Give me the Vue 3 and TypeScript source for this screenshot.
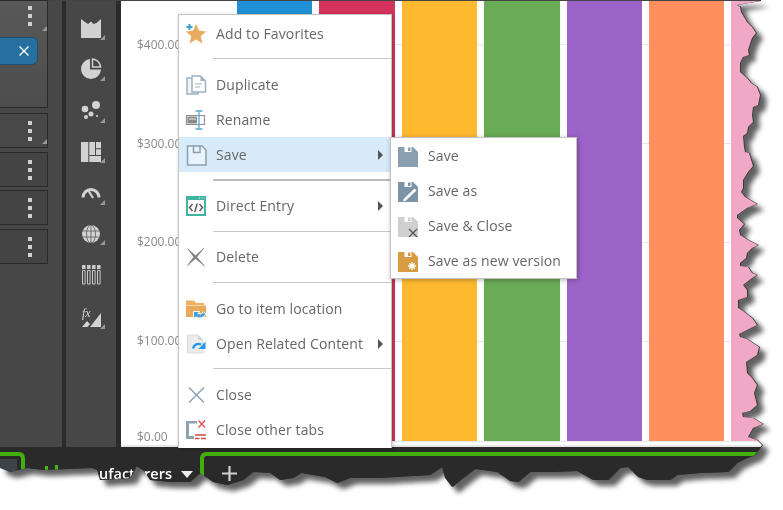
<script setup lang="ts">
const axis: string[] = ['$400.00', '$300.00', '$200.00', '$100.00', '$0.00']
const bars: string[] = ['#2090d6', '#d4335e', '#ffb92f', '#6aab55', '#9c63c9', '#ff8f5e', '#f0a8c6']
const rows: number[] = [1, 2, 3, 4]
const dots: number[] = [1, 2, 3]
</script>

<template>
  <div class="page">
    <div class="torn">
      <div class="sheet">
        <div class="main">
          <aside class="fields">
            <div class="field first">
              <div class="dots"><i v-for="d in dots" :key="d"></i></div>
              <span class="corner"></span>
              <div class="tag">
                <svg width="12" height="12" viewBox="0 0 12 12"><path d="M1.5 1.5 10.5 10.5M10.5 1.5 1.5 10.5" stroke="#fff" stroke-width="1.4" /></svg>
              </div>
            </div>
            <div v-for="r in rows" :key="r" class="field">
              <div class="dots"><i v-for="d in dots" :key="d"></i></div>
              <span v-if="r === 1" class="corner"></span>
            </div>
          </aside>

          <nav class="rail">
            <svg class="ri" viewBox="0 0 30 41"><path d="M5 6 9 9 12 11 15 8.500 17.500 11 20.500 10 25 6V25H5Z" fill="#d2d2d2" /><path d="M29 22V27H24Z" fill="#999" /></svg>
            <svg class="ri" viewBox="0 0 30 41"><path d="M14 5A10 10 0 1 0 25 15.500H14Z" fill="#d2d2d2" /><path d="M16.500 5V13H24.500A8.500 8.500 0 0 0 16.500 5Z" fill="none" stroke="#d2d2d2" stroke-width="1.500" /><path d="M29 22V27H24Z" fill="#999" /></svg>
            <svg class="ri" viewBox="0 0 30 41"><circle cx="20" cy="10" r="4" fill="#d2d2d2" /><circle cx="9" cy="14" r="3.300" fill="#d2d2d2" /><circle cx="15" cy="19" r="2.500" fill="#d2d2d2" /><circle cx="10" cy="22" r="2" fill="#d2d2d2" /><circle cx="21" cy="21" r="1" fill="#d2d2d2" /><path d="M29 23V28H24Z" fill="#999" /></svg>
            <svg class="ri" viewBox="0 0 30 41"><path d="M5 6H12.300V26H5ZM13.300 6H19V19H13.300ZM20 6H25V12.300H20ZM20 13.300H25V19H20ZM13.300 20H25V26H13.300Z" fill="#d2d2d2" /><path d="M29 22V27H24Z" fill="#999" /></svg>
            <svg class="ri" viewBox="0 0 30 41"><path d="M7 20.500A8 8 0 0 1 23 20.500" fill="none" stroke="#d2d2d2" stroke-width="3" /><path d="M12 13 17 21" stroke="#d2d2d2" stroke-width="2.200" /><path d="M29 23V28H24Z" fill="#999" /></svg>
            <svg class="ri" viewBox="0 0 30 41"><circle cx="15" cy="16" r="9" fill="#d2d2d2" /><path d="M6 13H24M6 19H24M15 7V25" stroke="#5a5a5a" stroke-width=".8" /><ellipse cx="15" cy="16" rx="4.500" ry="9" fill="none" stroke="#5a5a5a" stroke-width=".8" /><path d="M29 22V27H24Z" fill="#999" /></svg>
            <svg class="ri" viewBox="0 0 30 41"><path d="M6 6H9.600V10H6ZM11 6H14.600V10H11ZM16 6H19.600V10H16ZM21 6H24.600V10H21Z" fill="#c8c8c8" /><path d="M6.500 11.500H9.100V25H6.500ZM11.500 11.500H14.100V25H11.500ZM16.500 11.500H19.100V25H16.500ZM21.500 11.500H24.100V25H21.500Z" fill="none" stroke="#c8c8c8" stroke-width="1" /></svg>
            <svg class="ri" viewBox="0 0 30 41"><text x="6" y="17" class="fx">fx</text><path d="M25 13V27H14ZM6 27 11 21 14 24 11.500 27Z" fill="#d2d2d2" /><path d="M29 24V29H24Z" fill="#999" /></svg>
          </nav>

          <section class="chart">
            <div class="axis">
              <span v-for="a in axis" :key="a">{{ a }}</span>
            </div>
            <div class="plot">
              <div v-for="b in bars" :key="b" class="bar" :style="{ background: b }"></div>
            </div>
          </section>
        </div>

        <footer class="tabs">
          <div class="tab-left"><span class="tab-fill"></span></div>
          <div class="tab-mid">
            <span class="green-bit"></span>
            <span class="green-bit two"></span>
            <span class="tab-name">Manufacturers</span>
            <span class="tab-caret"></span>
          </div>
          <div class="tab-right">
            <svg width="15" height="15" viewBox="0 0 15 15"><path d="M7.500 0V15M0 7.500H15" stroke="#d0d0d0" stroke-width="2.200" /></svg>
          </div>
        </footer>

        <div class="menu">
          <div class="item">
            <svg class="mi" viewBox="0 0 24 24"><path d="M12 2 15 8.800 22.200 9.400 16.700 14.200 18.400 21.400 12 17.600 5.600 21.400 7.300 14.200 1.800 9.400 9 8.800Z" fill="#e9ab60" /><path d="M5.500 1.500V8.500M2 5H9" stroke="#fff" stroke-width="3.500" /><path d="M5.500 2V8M2.500 5H8.500" stroke="#3f9ecb" stroke-width="2" /></svg>
            <span>Add to Favorites</span>
          </div>
          <div class="sep"></div>
          <div class="item">
            <svg class="mi" viewBox="0 0 24 24"><path d="M8 5H3V21H14V18" fill="#f2f5f7" stroke="#9db1be" stroke-width="1.500" /><path d="M8 3H16.500L21.500 8V19H8Z" fill="#fff" stroke="#9db1be" stroke-width="1.500" /><path d="M16.500 3V8H21.500Z" fill="#9db1be" /><path d="M11 11H18M11 14H16" stroke="#9db1be" stroke-width="1.200" /></svg>
            <span>Duplicate</span>
          </div>
          <div class="item">
            <svg class="mi" viewBox="0 0 24 24"><path d="M2.500 7.500H20.500V16.500H2.500Z" fill="#fff" stroke="#8e8e8e" stroke-width="1.200" /><path d="M3.500 8.500H13V15.500H3.500Z" fill="#8a8a8a" /><path d="M5 11H12" stroke="#c8c8c8" stroke-width="1.500" /><path d="M15 3.500V20.500M11.500 3H18.500M11.500 21H18.500" stroke="#5aa8d4" stroke-width="1.300" fill="none" /></svg>
            <span>Rename</span>
          </div>
          <div class="item on">
            <svg class="mi" viewBox="0 0 24 24"><path d="M3.500 3H18L22 7V22H3.500Z" fill="#e9f3fb" stroke="#8aa0af" stroke-width="1.500" /><path d="M9.500 3V9.500H16V3" fill="none" stroke="#8aa0af" stroke-width="1.500" /></svg>
            <span>Save</span>
            <i class="arrow"></i>
          </div>
          <div class="sep thick"></div>
          <div class="item">
            <svg class="mi" viewBox="0 0 24 24"><path d="M3 3H21V21H3Z" fill="#fff" stroke="#40b5a4" stroke-width="2" /><path d="M2 2H22V6H2Z" fill="#40b5a4" /><path d="M15 4H16M17.500 4H18.500M20 4H20.500" stroke="#fff" stroke-width="1.200" /><path d="M8.500 10 5.500 13.500 8.500 17M15.500 10 18.500 13.500 15.500 17M13.300 9.500 10.700 18" fill="none" stroke="#555" stroke-width="1.400" /></svg>
            <span>Direct Entry</span>
            <i class="arrow"></i>
          </div>
          <div class="sep wide-top tight-bottom"></div>
          <div class="item">
            <svg class="mi" viewBox="0 0 24 24"><path d="M3.500 3.500 11.500 10.800 20 3 12.800 12 20.500 21 11.500 13.600 3.500 20.500 9.800 12Z" fill="#7f7f7f" stroke="#7f7f7f" stroke-width=".6" /></svg>
            <span>Delete</span>
          </div>
          <div class="sep wide-top"></div>
          <div class="item">
            <svg class="mi" viewBox="0 0 24 24"><path d="M2 3.500H10L12 6H20V8H2Z" fill="#f0b060" /><path d="M2 8.500H22V20H2Z" fill="#e9a95b" /><path d="M22 17A7 7 0 0 1 12 20L9.500 21.500V14.500H16L13.800 16.500A4.500 4.500 0 0 0 19.500 15Z" fill="#4a9fd4" stroke="#fff" stroke-width="1" /></svg>
            <span>Go to item location</span>
          </div>
          <div class="item">
            <svg class="mi" viewBox="0 0 24 24"><path d="M3.500 3H14L19 8V21H3.500Z" fill="#ececec" stroke="#dcdcdc" stroke-width="1" /><path d="M14 3V8H19Z" fill="#d4d4d4" /><path d="M9 16.500C10 12.500 14 11 17 12.500" fill="none" stroke="#2299ee" stroke-width="2.400" /><path d="M21.500 9.500V17H14.500Z" fill="#2299ee" /></svg>
            <span>Open Related Content</span>
            <i class="arrow"></i>
          </div>
          <div class="sep"></div>
          <div class="item">
            <svg class="mi" viewBox="0 0 24 24"><path d="M5 4.500 20 19.500M20 4.500 5 19.500" stroke="#8ba3b3" stroke-width="1.500" /></svg>
            <span>Close</span>
          </div>
          <div class="item">
            <svg class="mi" viewBox="0 0 24 24"><path d="M2 3H13V5.500H5V18H10V21H2Z" fill="#8ba3b3" /><path d="M14.500 2.500 21 9.500M21 2.500 14.500 9.500" stroke="#d9534f" stroke-width="1.300" /><path d="M11 17H22M11 20.500H15.500M17 20.500H22" stroke="#d04a4a" stroke-width="1.600" /></svg>
            <span>Close other tabs</span>
          </div>
        </div>

        <div class="menu sub">
          <div class="subitem">
            <svg class="si" viewBox="0 0 20 20"><path d="M0 0H15L20 5V20H0Z" fill="#8a9fb0" /><path d="M6.500 0H13.500V5H6.500Z" fill="#fff" /><path d="M10 .5H12.500V4H10Z" fill="#8a9fb0" /></svg>
            <span>Save</span>
          </div>
          <div class="subitem">
            <svg class="si" viewBox="0 0 20 20"><path d="M0 0H15L20 5V20H0Z" fill="#7c94a8" /><path d="M6.500 0H13.500V5H6.500Z" fill="#fff" /><path d="M10 .5H12.500V4H10Z" fill="#7c94a8" /><path d="M6.500 18 17.500 7.500" stroke="#fff" stroke-width="2.600" /><path d="M5 19.500 6 16.500 8 18.500Z" fill="#fff" /></svg>
            <span>Save as</span>
          </div>
          <div class="subitem">
            <svg class="si" viewBox="0 0 20 20"><path d="M0 0H15L20 5V20H0Z" fill="#cfcfcf" /><path d="M6.500 0H13.500V5H6.500Z" fill="#fff" /><path d="M10 .5H12.500V4H10Z" fill="#cfcfcf" /><path d="M10 10H20V20H10Z" fill="#cfcfcf" /><path d="M11 12 19 20M19 12 11 20" stroke="#555" stroke-width="1.300" /></svg>
            <span>Save &amp; Close</span>
          </div>
          <div class="subitem">
            <svg class="si" viewBox="0 0 20 20"><path d="M0 0H15L20 5V20H0Z" fill="#d89a45" /><path d="M6.500 0H13.500V5H6.500Z" fill="#fff" /><path d="M10 .5H12.500V4H10Z" fill="#d89a45" /><path d="M14 10V18M10 14H18M11.200 11.200 16.800 16.800M16.800 11.200 11.200 16.800" stroke="#fff" stroke-width="1.300" /></svg>
            <span>Save as new version</span>
          </div>
        </div>
      </div>
    </div>
  </div>
</template>

<style scoped>
.page {
  width: 783px;
  height: 510px;
  background: #fff;
  overflow: hidden;
  font-family: "Open Sans", "Noto Sans", sans-serif;
}
.torn {
  width: 783px;
  height: 510px;
  filter: drop-shadow(1px 0.5px 0 #3a3a3a) drop-shadow(6px 6px 2.500px rgba(0, 0, 0, 0.62));
}
.sheet {
  position: relative;
  width: 783px;
  height: 510px;
  display: flex;
  flex-direction: column;
  border-top: 1px solid #444;
  box-sizing: border-box;
  clip-path: polygon(0 0, 760px 0, 760px 1px, 737px 5px, 740px 7px, 741px 12px, 747px 22px, 752px 27px, 756px 33px, 752px 38px, 748px 50px, 749px 55px, 743px 57px, 740px 63px, 740px 72px, 747px 78px, 751px 83px, 757px 87px, 760px 95px, 758px 105px, 753px 107px, 752px 115px, 753px 122px, 748px 127px, 747px 133px, 743px 136px, 744px 147px, 745px 152px, 749px 153px, 752px 163px, 753px 166px, 748px 172px, 743px 180px, 743px 188px, 741px 192px, 745px 197px, 757px 204px, 747px 208px, 737px 215px, 737px 218px, 744px 224px, 739px 230px, 740px 235px, 748px 240px, 758px 245px, 752px 248px, 747px 253px, 746px 258px, 740px 263px, 740px 266px, 748px 267px, 752px 273px, 757px 275px, 752px 278px, 743px 285px, 747px 290px, 747px 297px, 738px 300px, 738px 308px, 743px 311px, 752px 318px, 757px 325px, 747px 330px, 739px 334px, 740px 337px, 747px 339px, 759px 347px, 757px 355px, 746px 362px, 747px 373px, 752px 378px, 757px 385px, 754px 393px, 757px 405px, 750px 411px, 742px 413px, 743px 417px, 753px 418px, 763px 424px, 753px 428px, 748px 437px, 757px 440px, 762px 445px, 757px 452px, 755px 455px, 745px 459px, 737px 463px, 728px 472px, 700px 473px, 677px 475px, 670px 480px, 647px 480px, 638px 477px, 628px 467px, 620px 468px, 608px 480px, 593px 480px, 577px 471px, 553px 472px, 530px 472px, 518px 482px, 510px 481px, 497px 472px, 475px 469px, 463px 478px, 452px 487px, 445px 478px, 442px 467px, 430px 475px, 380px 478px, 350px 478px, 337px 483px, 325px 477px, 301px 473px, 293px 478px, 280px 480px, 270px 473px, 253px 472px, 243px 480px, 227px 485px, 213px 482px, 200px 473px, 190px 482px, 170px 482px, 150px 480px, 144px 471px, 136px 466px, 130px 478px, 100px 480px, 97px 470px, 92px 468px, 43px 470px, 27px 468px, 10px 472px, 0 468px);
}
.main {
  display: flex;
  height: 446px;
  flex: none;
}
.fields {
  width: 62px;
  flex: none;
  background: #474747;
  display: flex;
  flex-direction: column;
}
.field {
  position: relative;
  width: 48px;
  height: 35px;
  margin-bottom: 3.500px;
  box-sizing: border-box;
  border: 1px solid #2a2a2a;
  border-left: 0;
  background: #444;
}
.field.first {
  height: 108px;
  margin-top: -1px;
  margin-bottom: 5px;
  background: linear-gradient(#585858, #4d4d4d);
}
.field:nth-child(2) {
  background: #484848;
}
.dots {
  position: absolute;
  top: 7px;
  left: 28px;
  display: flex;
  flex-direction: column;
  gap: 4px;
}
.field.first .dots {
  top: 5px;
}
.dots i {
  display: block;
  width: 4px;
  height: 4px;
  background: #d0d0d0;
}
.corner {
  position: absolute;
  right: 0;
  bottom: auto;
  width: 0;
  height: 0;
  border-left: 5px solid transparent;
  border-bottom: 5px solid #999;
}
.field .corner {
  top: 25px;
}
.tag {
  position: absolute;
  left: -6px;
  top: 36px;
  width: 44px;
  height: 28px;
  box-sizing: border-box;
  background: #25709f;
  border: 1px solid #1e4f70;
  border-radius: 6px;
  display: flex;
  align-items: center;
  justify-content: flex-end;
  padding-right: 7px;
}
.rail {
  width: 59px;
  flex: none;
  box-sizing: border-box;
  background: #474747;
  border-left: 4px solid #2b2b2b;
  border-right: 5px solid #2b2b2b;
  padding-top: 12px;
  display: flex;
  flex-direction: column;
  align-items: flex-start;
}
.ri {
  width: 30px;
  height: 41px;
  flex: none;
  margin-left: 10px;
}
.fx {
  font-family: "Liberation Serif", serif;
  font-style: italic;
  font-size: 12px;
  fill: #d8d8d8;
}
.chart {
  flex: 1;
  min-width: 0;
  display: flex;
  background: #fff;
  border-bottom: 2px solid #e6e6e6;
  box-sizing: border-box;
}
.axis {
  width: 116px;
  flex: none;
  box-sizing: border-box;
  padding: 36px 0 0 16px;
  display: flex;
  flex-direction: column;
  gap: 82.500px;
  font-size: 12px;
  line-height: 16px;
  color: #8a8a8a;
}
.axis span:last-child {
  margin-top: -2px;
}
.plot {
  flex: 1;
  display: flex;
  gap: 7px;
  min-width: 0;
  margin-bottom: 3px;
  border-bottom: 1px solid #e6e6e6;
  background: repeating-linear-gradient(to bottom, transparent 0, transparent 98px, #e6e6e6 98px, #e6e6e6 99px) 0 -55px;
}
.bar {
  width: 75.400px;
  flex: none;
}
.bar:last-child {
  width: 60px;
}
.tabs {
  flex: 1;
  display: flex;
  background: #2a2a2a;
  padding-top: 5px;
  align-items: flex-start;
}
.tab-left {
  width: 25px;
  height: 24px;
  flex: none;
  box-sizing: border-box;
  border-top: 4px solid #44ae0c;
  border-right: 4px solid #44ae0c;
  border-top-right-radius: 6px;
  padding: 3px 0 0;
}
.tab-fill {
  display: block;
  width: 17px;
  height: 14px;
  background: #3c4448;
}
.tab-mid {
  width: 175px;
  flex: none;
  box-sizing: border-box;
  display: flex;
  align-items: center;
  padding: 12px 7px 0 0;
  justify-content: flex-end;
  gap: 9px;
  position: relative;
}
.green-bit {
  position: absolute;
  left: 20px;
  top: 14px;
  width: 3px;
  height: 5px;
  background: #4ab512;
}
.green-bit.two {
  left: 30px;
  top: 13px;
}
.tab-name {
  color: #fff;
  font-size: 14.500px;
  line-height: 20px;
  font-weight: 600;
}
.tab-caret {
  width: 0;
  height: 0;
  border-left: 6px solid transparent;
  border-right: 6px solid transparent;
  border-top: 7px solid #f0f0f0;
}
.tab-right {
  flex: 1;
  height: 30px;
  box-sizing: border-box;
  border-top: 4px solid #44ae0c;
  border-left: 4px solid #44ae0c;
  border-top-left-radius: 6px;
  padding: 10px 0 0 18px;
}
.tab-right svg {
  display: block;
}
.menu {
  position: absolute;
  left: 178px;
  top: 13px;
  width: 214px;
  height: 434px;
  box-sizing: border-box;
  background: #fff;
  border: 1px solid #c4c4c4;
  border-bottom: 0;
  padding-top: 1px;
  box-shadow: 1px 1px 4px rgba(0, 0, 0, 0.22);
  color: #666;
  font-size: 14px;
  letter-spacing: 0.12px;
}
.item {
  height: 35px;
  display: flex;
  align-items: center;
  gap: 8px;
  padding-left: 5px;
  padding-top: 1px;
  box-sizing: border-box;
  line-height: 20px;
}
.item.on {
  background: #d7ebfb;
}
.mi {
  width: 24px;
  height: 24px;
  flex: none;
}
.sep {
  height: 1px;
  margin: 7px 0 8px 34px;
  background: #c8c8c8;
}
.sep.wide-top {
  margin-top: 8px;
}
.sep.tight-bottom {
  margin-bottom: 7px;
}
.sep.thick {
  height: 2px;
  margin-top: 7px;
  margin-bottom: 7px;
  background: #bdbdbd;
}
.arrow {
  margin-left: auto;
  margin-right: 8px;
  width: 0;
  height: 0;
  border-top: 5px solid transparent;
  border-bottom: 5px solid transparent;
  border-left: 5px solid #555;
}
.menu.sub {
  left: 390px;
  top: 136px;
  width: 187px;
  height: 142px;
  border-bottom: 1px solid #c4c4c4;
  padding-top: 0;
  box-shadow: 1px 1px 5px rgba(0, 0, 0, 0.3);
}
.subitem {
  height: 35px;
  display: flex;
  align-items: center;
  gap: 10px;
  padding-left: 7px;
  line-height: 20px;
}
.si {
  width: 20px;
  height: 20px;
  flex: none;
  margin-top: 2px;
}
</style>
